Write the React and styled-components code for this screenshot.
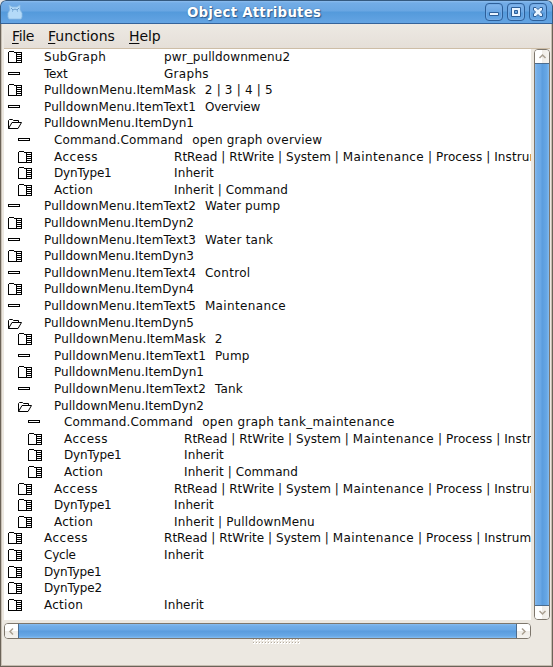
import React from 'react';
import styled, { createGlobalStyle, css } from 'styled-components';

const Global = createGlobalStyle`
  * { box-sizing: border-box; }
  html, body { margin: 0; padding: 0; background: #e4e4e4; overflow: hidden; }
  body { font-family: "DejaVu Sans", sans-serif; color: #0c0c0c; }
  svg { display: block; }
`;

const Frame = styled.div`
  width: 553px;
  height: 667px;
  display: flex;
  flex-direction: column;
  background: #ece8e1;
  overflow: hidden;
  border-radius: 6px 6px 0 0;
`;

const TitleBar = styled.header`
  height: 24px;
  flex: none;
  display: flex;
  padding: 1px 5px 0 6px;
  border: 1px solid #34597f;
  border-bottom-color: #35639a;
  border-radius: 6px 6px 0 0;
  background: linear-gradient(#8cbcee 0, #72ace6 2px, #69a6e2 10px, #549adb 11px, #64a4e3 22px);
`;

const Title = styled.h1`
  margin: 0 auto 0 164px;
  font-size: 13.33px;
  line-height: 21px;
  font-weight: bold;
  letter-spacing: 0.25px;
  color: #fff;
  white-space: nowrap;
  text-shadow: 1px 1px 1px #2d5b8f, 0 0 1px #2d5b8f;
`;

const Controls = styled.div`
  display: flex;
  gap: 4px;
  padding-top: 1px;
`;

const ControlButton = styled.button`
  width: 18px;
  height: 18px;
  padding: 0;
  border: 1px solid #2d5f99;
  border-radius: 4px;
  background: linear-gradient(#82b5ec, #6ba7e4 8px, #559adc 9px, #6aa9e6);
  box-shadow: inset 0 0 0 1px #74ace6;
`;

const Body = styled.div`
  flex: 1;
  display: flex;
  flex-direction: column;
  border: solid #6b6358;
  border-width: 0 1px 1px;
  box-shadow: inset 1px 0 #c9c1b6, inset -1px -1px #c5bcb0;
`;

const MenuBar = styled.nav`
  height: 25px;
  flex: none;
  display: flex;
  margin: 0 2px 0 3px;
  padding-left: 8px;
  border-bottom: 1px solid #cdbda6;
  background: linear-gradient(#ede9e3, #e5dfd8);
  font-size: 14px;
  line-height: 24px;
`;

const MenuItem = styled.div`
  width: ${(p) => p.$width}px;
  letter-spacing: ${(p) => p.$tracking}px;
  &::first-letter {
    text-decoration: underline;
    text-decoration-thickness: 1px;
    text-underline-offset: 2px;
  }
`;

const Content = styled.main`
  display: grid;
  grid-template-columns: 527px 16px;
  grid-template-rows: 571px 16px;
  column-gap: 3px;
  row-gap: 3px;
  padding-left: 3px;
`;

const List = styled.div`
  background: #fff;
  overflow: hidden;
  font-size: 12px;
`;

const Row = styled.div`
  height: ${(p) => p.$height}px;
  display: flex;
  padding-left: ${(p) => 4 + p.$depth * 10}px;
  white-space: pre;
  line-height: 16px;
`;

const IconCell = styled.span`
  width: 36px;
  flex: none;
  padding-top: 2px;
`;

const Label = styled.span`
  min-width: 120px;
  flex: none;
  padding-right: 9px;
  letter-spacing: ${(p) => p.$tracking}px;
`;

const Value = styled.span`
  flex: none;
  letter-spacing: ${(p) => p.$tracking}px;
`;

const ScrollBar = styled.div`
  display: flex;
  flex-direction: ${(p) => (p.$vertical ? 'column' : 'row')};
  border: 1px solid #7d766c;
  border-radius: 4px;
  overflow: hidden;
  background: #fff;
`;

const Arrow = styled.span`
  flex: 0 0 13px;
  display: flex;
  align-items: center;
  justify-content: center;
  background: linear-gradient(${(p) => (p.$vertical ? '90deg' : '180deg')}, #fff 50%, #efece7 51%, #f5f3ef);
`;

const thumbStops = '#88bcef 0, #72ade8 2px, #69a7e5 6px, #5a9cdd 7px, #68a8e6 12px, #86bdf0';

const Thumb = styled.span`
  flex: 1;
  border: solid #4c6c8e;
  ${(p) =>
    p.$vertical
      ? css`
          border-width: 1px 0;
          background: linear-gradient(90deg, ${thumbStops});
        `
      : css`
          border-width: 0 1px;
          background: linear-gradient(${thumbStops});
        `}
`;

const StatusArea = styled.footer`
  flex: 1;
  display: flex;
  justify-content: center;
`;

function LeafIcon() {
  return (
    <svg width="14" height="13" shapeRendering="crispEdges">
      <path d="M0 4h12v3h-12z" fill="#000" />
      <path d="M1 5h10v1h-10z" fill="#fff" />
    </svg>
  );
}

function ClosedIcon() {
  return (
    <svg width="14" height="13" shapeRendering="crispEdges" fill="#000">
      <path d="M1 0h5v1h-5zM0 1h1v11h-1zM6 1h1v1h-1zM7 1h2v1h-2zM0 11h9v1h-9z" />
      <path d="M8 1h1v11h-1zM13 1h1v11h-1zM8 1h6v1h-6zM9 3h4v1h-4zM9 5h4v1h-4zM9 7h4v1h-4zM9 9h4v1h-4zM9 11h4v1h-4z" />
    </svg>
  );
}

function OpenIcon() {
  return (
    <svg width="14" height="13" fill="none" stroke="#000">
      <path d="M0.5 11.5V3.5L1.5 2.5H4.5L5.5 3.5H10.5V5.5M0.5 11.5L4 5.5H13.5L10 11.5Z" />
    </svg>
  );
}

const icons = { leaf: LeafIcon, closed: ClosedIcon, open: OpenIcon };

function AppIcon() {
  return (
    <svg width="16" height="18" viewBox="0 0 16 18">
      <path d="M2 3l3 2h5l3-2v5l2 3v4l-1 2H2l-1-2v-4l2-3z" fill="#b4daf8" stroke="#8dbce5" strokeWidth="0.8" />
      <path d="M4 6l2 2l2-1l2 1l2-2M5 9h1M10 9h1" fill="none" stroke="#5f93c6" strokeWidth="0.9" />
    </svg>
  );
}

const controlPaths = {
  Minimize: 'M3.5 8.5h9v3h-9z',
  Maximize: 'M3.5 3.5h9v9h-9zM6.5 6.5v3h3v-3z',
  Close: 'M3.5 3.5h2.5l2 2l2-2h2.5v2.5l-2 2l2 2v2.5h-2.5l-2-2l-2 2h-2.5v-2.5l2-2l-2-2z',
};

function ControlIcon({ name }) {
  return (
    <svg width="16" height="16" viewBox="0 0 16 16">
      <path d={controlPaths[name]} fill="#e9f4ff" fillRule="evenodd" stroke="#2d5f99" strokeWidth="1" />
    </svg>
  );
}

const arrowPaths = {
  up: 'M1.5 6L4.5 3L7.5 6',
  down: 'M1.5 3L4.5 6L7.5 3',
  left: 'M6 1.5L3 4.5L6 7.5',
  right: 'M3 1.5L6 4.5L3 7.5',
};

function Bar({ vertical, start, end }) {
  const arrow = (dir) => (
    <Arrow $vertical={vertical}>
      <svg width="9" height="9">
        <path d={arrowPaths[dir]} fill="none" stroke="#aaa092" strokeWidth="1.5" />
      </svg>
    </Arrow>
  );
  return (
    <ScrollBar $vertical={vertical}>
      {arrow(start)}
      <Thumb $vertical={vertical} />
      {arrow(end)}
    </ScrollBar>
  );
}

function Grip() {
  return (
    <svg width="48" height="5" shapeRendering="crispEdges">
      {Array.from({ length: 16 }, (_, i) => (
        <g key={i}>
          <path d={`M${i * 3} 0h2v2h-2zM${i * 3} 3h2v2h-2z`} fill="#fff" />
          <path d={`M${i * 3} 0h1v1h-1zM${i * 3} 3h1v1h-1z`} fill="#b3aa9d" />
        </g>
      ))}
    </svg>
  );
}

const access = ['RtRead | RtWrite | System | ', 'Maintenance', ' | Process | Instrument'];

const tracking = {
  SubGraph: 0.3,
  pwr_pulldownmenu2: 0.1,
  Text: -0.2,
  Graphs: 0.3,
  'PulldownMenu.ItemMask': 0.15,
  'PulldownMenu.ItemText1': 0.1,
  'PulldownMenu.ItemText2': 0.1,
  'PulldownMenu.ItemText3': 0.1,
  'PulldownMenu.ItemText4': 0.1,
  'PulldownMenu.ItemText5': 0.1,
  '2 | 3 | 4 | 5': 0.18,
  Overview: -0.15,
  'Command.Command': 0.13,
  'open graph overview': 0.16,
  Access: 0.5,
  [access[0]]: 0.04,
  [access[2]]: 0.1,
  DynType1: -0.2,
  DynType2: -0.15,
  Inherit: 0.12,
  Action: 0.25,
  'Inherit | Command': 0.09,
  'Inherit | PulldownMenu': 0.15,
  'Water pump': 0.15,
  'Water tank': 0.25,
  Control: 0.32,
  Maintenance: 0.36,
  Pump: 0.2,
  Tank: 0.2,
  'open graph tank_maintenance': 0.32,
  Cycle: -0.2,
};

const rows = [
  [0, 'closed', 'SubGraph', 'pwr_pulldownmenu2'],
  [0, 'leaf', 'Text', 'Graphs'],
  [0, 'closed', 'PulldownMenu.ItemMask', '2 | 3 | 4 | 5'],
  [0, 'leaf', 'PulldownMenu.ItemText1', 'Overview'],
  [0, 'open', 'PulldownMenu.ItemDyn1', ''],
  [1, 'leaf', 'Command.Command', 'open graph overview'],
  [1, 'closed', 'Access', access],
  [1, 'closed', 'DynType1', 'Inherit'],
  [1, 'closed', 'Action', 'Inherit | Command'],
  [0, 'leaf', 'PulldownMenu.ItemText2', 'Water pump'],
  [0, 'closed', 'PulldownMenu.ItemDyn2', ''],
  [0, 'leaf', 'PulldownMenu.ItemText3', 'Water tank'],
  [0, 'closed', 'PulldownMenu.ItemDyn3', ''],
  [0, 'leaf', 'PulldownMenu.ItemText4', 'Control'],
  [0, 'closed', 'PulldownMenu.ItemDyn4', ''],
  [0, 'leaf', 'PulldownMenu.ItemText5', 'Maintenance'],
  [0, 'open', 'PulldownMenu.ItemDyn5', ''],
  [1, 'closed', 'PulldownMenu.ItemMask', '2'],
  [1, 'leaf', 'PulldownMenu.ItemText1', 'Pump'],
  [1, 'closed', 'PulldownMenu.ItemDyn1', ''],
  [1, 'leaf', 'PulldownMenu.ItemText2', 'Tank'],
  [1, 'open', 'PulldownMenu.ItemDyn2', ''],
  [2, 'leaf', 'Command.Command', 'open graph tank_maintenance'],
  [2, 'closed', 'Access', access],
  [2, 'closed', 'DynType1', 'Inherit'],
  [2, 'closed', 'Action', 'Inherit | Command'],
  [1, 'closed', 'Access', access],
  [1, 'closed', 'DynType1', 'Inherit'],
  [1, 'closed', 'Action', 'Inherit | PulldownMenu'],
  [0, 'closed', 'Access', access],
  [0, 'closed', 'Cycle', 'Inherit'],
  [0, 'closed', 'DynType1', ''],
  [0, 'closed', 'DynType2', ''],
  [0, 'closed', 'Action', 'Inherit'],
];

// Whole-pixel row tops at an average pitch of 16.6px keep the icons crisp.
const rowTop = (i) => Math.round(i * 16.6);

export default function App() {
  return (
    <>
      <Global />
      <Frame>
        <TitleBar>
          <AppIcon />
          <Title>Object Attributes</Title>
          <Controls>
            {Object.keys(controlPaths).map((name) => (
              <ControlButton key={name} aria-label={name}>
                <ControlIcon name={name} />
              </ControlButton>
            ))}
          </Controls>
        </TitleBar>
        <Body>
          <MenuBar>
            <MenuItem $width={36} $tracking={-0.35}>File</MenuItem>
            <MenuItem $width={81} $tracking={0}>Functions</MenuItem>
            <MenuItem $width={40} $tracking={-0.1}>Help</MenuItem>
          </MenuBar>
          <Content>
            <List>
              {rows.map(([depth, kind, label, value], i) => {
                const Icon = icons[kind];
                return (
                  <Row key={i} $depth={depth} $height={rowTop(i + 1) - rowTop(i)}>
                    <IconCell>
                      <Icon />
                    </IconCell>
                    <Label $tracking={tracking[label] ?? 0.03}>{label}</Label>
                    {[value].flat().map((part) => (
                      <Value key={part} $tracking={tracking[part] ?? 0}>{part}</Value>
                    ))}
                  </Row>
                );
              })}
            </List>
            <Bar vertical start="up" end="down" />
            <Bar start="left" end="right" />
          </Content>
          <StatusArea>
            <Grip />
          </StatusArea>
        </Body>
      </Frame>
    </>
  );
}
